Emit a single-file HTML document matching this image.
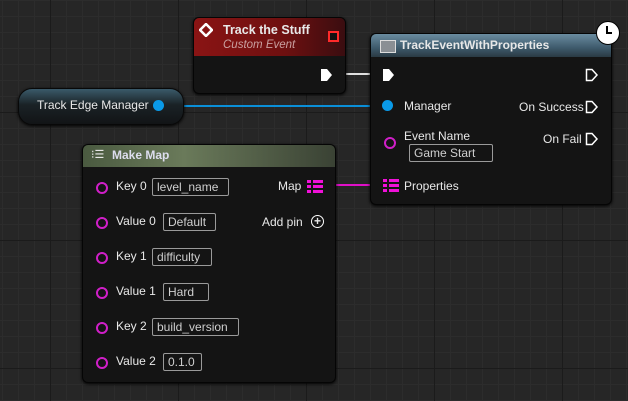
<!DOCTYPE html>
<html><head><style>
body{margin:0;width:628px;height:401px;overflow:hidden;background:#262626;font-family:"Liberation Sans",sans-serif;color:#e8e8e8;position:relative}
.grid{position:absolute;inset:0;background-image:
linear-gradient(90deg,#1b1b1b 1px,transparent 1px),linear-gradient(#1b1b1b 1px,transparent 1px),
linear-gradient(90deg,#2c2c2c 1px,transparent 1px),linear-gradient(#2c2c2c 1px,transparent 1px);
background-size:128px 128px,128px 128px,16px 16px,16px 16px;background-position:50px 112px,50px 112px,2px 0,2px 0}
.node{position:absolute;background:#141414;border:1px solid #050505;border-radius:6px;box-shadow:0 1px 3px #000;overflow:hidden}
.hdr{position:absolute;left:0;right:0;top:0}
.t{position:absolute;font-size:12px;white-space:nowrap}
.b{font-weight:bold}
.box{position:absolute;border:1px solid #9a9a9a;border-radius:2px;font-size:12px;color:#cfcfcf;padding:0 4px;height:16px;line-height:16px;white-space:nowrap}
.pin{position:absolute;width:8px;height:8px;border:2px solid #d01fc8;border-radius:50%}
.abs{position:absolute}
</style></head><body>
<div class="grid"></div>
<svg class="abs" style="left:0;top:0" width="628" height="401">
<line x1="165" y1="106" x2="384" y2="106" stroke="#0a8fd8" stroke-width="2"/>
<line x1="336" y1="74" x2="381" y2="74" stroke="#e0e0e0" stroke-width="2"/>
<line x1="322" y1="185" x2="381" y2="185" stroke="#e010c8" stroke-width="2"/>
</svg>

<!-- Custom event -->
<div class="node" style="left:193px;top:17px;width:151px;height:75px">
<div class="hdr" style="height:38px;background:linear-gradient(90deg,#8a1414,#6e1010 60%,#3a0d10)"></div>
<svg class="abs" style="left:5px;top:5px" width="14" height="14"><path d="M7 1L13 7L7 13L1 7Z" fill="none" stroke="#fff" stroke-width="2.5"/></svg>
<div class="t b" style="left:29px;top:5px;font-size:12.5px">Track the Stuff</div>
<div class="t" style="left:29px;top:21px;font-style:italic;color:#c9a0a0;font-size:11.5px">Custom Event</div>
<div class="abs" style="left:134px;top:13px;width:7px;height:7px;border:2px solid #ff2a2a;background:#111"></div>
<svg class="abs" style="left:126px;top:50px" width="14" height="14"><path d="M1 1H7L12 7L7 13H1Z" fill="#fff"/></svg>
</div>

<!-- Track Edge Manager -->
<div class="abs" style="left:18px;top:88px;width:164px;height:35px;border-radius:14px;background:linear-gradient(#3a5a6a,#1a2226 45%,#121416);border:1px solid #080808;box-shadow:0 1px 3px #000"></div>
<div class="t" style="left:37px;top:98px">Track Edge Manager</div>
<div class="abs" style="left:153px;top:100px;width:11px;height:11px;border-radius:50%;background:#0a9ae8"></div>

<!-- Track event node -->
<div class="node" style="left:370px;top:33px;width:240px;height:170px">
<div class="hdr" style="height:23px;background:linear-gradient(#6a8ca0,#3e5a6c 60%,#2a3a44)"></div>
<div class="abs" style="left:9px;top:6px;width:14px;height:11px;border:1px solid #ddd;background:#8a8f94"></div>
<div class="t b" style="left:29px;top:4px">TrackEventWithProperties</div>
<svg class="abs" style="left:11px;top:34px" width="14" height="14"><path d="M1 1H7L12 7L7 13H1Z" fill="#fff"/></svg>
<svg class="abs" style="left:214px;top:34px" width="14" height="14"><path d="M1.5 1.5H7L12 7L7 12.5H1.5Z" fill="none" stroke="#fff" stroke-width="1.5"/></svg>
<div class="abs" style="left:11px;top:66px;width:11px;height:11px;border-radius:50%;background:#0a9ae8"></div>
<div class="t" style="left:33px;top:65px">Manager</div>
<div class="t" style="left:148px;top:66px">On Success</div>
<svg class="abs" style="left:214px;top:66px" width="14" height="14"><path d="M1.5 1.5H7L12 7L7 12.5H1.5Z" fill="none" stroke="#fff" stroke-width="1.5"/></svg>
<div class="pin" style="left:13px;top:103px"></div>
<div class="t" style="left:33px;top:95px">Event Name</div>
<div class="box" style="left:38px;top:110px;width:74px">Game Start</div>
<div class="t" style="left:172px;top:98px">On Fail</div>
<svg class="abs" style="left:214px;top:98px" width="14" height="14"><path d="M1.5 1.5H7L12 7L7 12.5H1.5Z" fill="none" stroke="#fff" stroke-width="1.5"/></svg>
<svg class="abs" style="left:12px;top:145px" width="17" height="14"><g fill="#f010d8"><rect x="0" y="0" width="4" height="3"/><rect x="6" y="0" width="10" height="3"/><rect x="0" y="5" width="4" height="3"/><rect x="6" y="5" width="10" height="3"/><rect x="0" y="10" width="4" height="3"/><rect x="6" y="10" width="10" height="3"/></g></svg>
<div class="t" style="left:33px;top:145px">Properties</div>
</div>
<div class="abs" style="left:596px;top:21px;width:22px;height:22px;border-radius:50%;background:#fff;border:1px solid #000"></div>
<svg class="abs" style="left:596px;top:21px" width="24" height="24"><path d="M11 5V12H16" fill="none" stroke="#000" stroke-width="2"/></svg>

<!-- Make Map -->
<div class="node" style="left:82px;top:144px;width:252px;height:237px">
<div class="hdr" style="height:22px;background:linear-gradient(90deg,#4a5a40,#6a7a5a 40%,#3a4234)"></div>
<div class="t" style="left:8px;top:3px;font-size:11px">⁝☰</div>
<div class="t b" style="left:29px;top:3px;color:#dde">Make Map</div>
<div class="t" style="left:195px;top:34px">Map</div>
<svg class="abs" style="left:224px;top:35px" width="17" height="14"><g fill="#f010d8"><rect x="0" y="0" width="4" height="3"/><rect x="6" y="0" width="10" height="3"/><rect x="0" y="5" width="4" height="3"/><rect x="6" y="5" width="10" height="3"/><rect x="0" y="10" width="4" height="3"/><rect x="6" y="10" width="10" height="3"/></g></svg>
<div class="t" style="left:179px;top:70px">Add pin</div>
<div class="abs" style="left:228px;top:70px;width:11px;height:11px;border:1.5px solid #fff;border-radius:50%;font-size:12px;line-height:11px;text-align:center;font-weight:bold">+</div>

<div class="pin" style="left:13px;top:37px"></div><div class="t" style="left:33px;top:34px">Key 0</div><div class="box" style="left:69px;top:33px;width:67px">level_name</div>
<div class="pin" style="left:13px;top:72px"></div><div class="t" style="left:33px;top:69px">Value 0</div><div class="box" style="left:80px;top:68px;width:43px">Default</div>
<div class="pin" style="left:13px;top:107px"></div><div class="t" style="left:33px;top:104px">Key 1</div><div class="box" style="left:69px;top:103px;width:50px">difficulty</div>
<div class="pin" style="left:13px;top:142px"></div><div class="t" style="left:33px;top:139px">Value 1</div><div class="box" style="left:80px;top:138px;width:36px">Hard</div>
<div class="pin" style="left:13px;top:177px"></div><div class="t" style="left:33px;top:174px">Key 2</div><div class="box" style="left:69px;top:173px;width:77px">build_version</div>
<div class="pin" style="left:13px;top:212px"></div><div class="t" style="left:33px;top:209px">Value 2</div><div class="box" style="left:80px;top:208px;width:29px">0.1.0</div>
</div>
</body></html>
